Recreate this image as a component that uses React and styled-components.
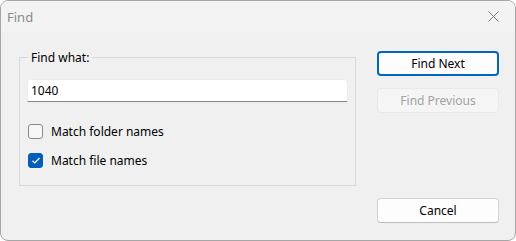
import styled, { createGlobalStyle } from "styled-components";

const Global = createGlobalStyle`
  html, body {
    margin: 0;
    padding: 0;
    background: #ffffff;
  }
  body {
    font-family: "Noto Sans", "Open Sans", sans-serif;
    font-size: 12px;
  }
`;

const Window = styled.div`
  box-sizing: border-box;
  width: 516px;
  height: 241px;
  border: 1px solid #a6a6a6;
  border-radius: 8px;
  background: #f0f0f0;
  display: flex;
  flex-direction: column;
  overflow: hidden;
`;

const TitleBar = styled.div`
  height: 31px;
  background: #f3f3f3;
  display: flex;
  align-items: center;
  justify-content: space-between;
  padding: 0 16px 0 6px;
  color: #8a8a8a;
  font-size: 13px;
`;

const Body = styled.div`
  flex: 1;
  display: flex;
  gap: 21px;
  padding: 19px 17px 17px 18px;
`;

const Group = styled.div`
  position: relative;
  box-sizing: border-box;
  width: 337px;
  height: 129px;
  margin-top: 6px;
  border: 1px solid #d8d8d8;
  padding: 21px 7px 0 7px;
  display: flex;
  flex-direction: column;
`;

const Legend = styled.span`
  position: absolute;
  top: -8px;
  left: 8px;
  padding: 0 3px;
  background: #f0f0f0;
  color: #000;
  line-height: 16px;
`;

const TextInput = styled.input`
  box-sizing: border-box;
  width: 321px;
  height: 23px;
  border: 1px solid #ececec;
  border-bottom: 1px solid #848484;
  border-radius: 3px 3px 0 0;
  background: #ffffff;
  font: inherit;
  padding: 0 3px;
  color: #000;
  outline: none;
`;

const CheckList = styled.div`
  display: flex;
  flex-direction: column;
  gap: 13px;
  margin-top: 21px;
`;

const CheckRow = styled.label`
  display: flex;
  align-items: center;
  gap: 8px;
  height: 16px;
  color: #000;
`;

const Box = styled.span`
  box-sizing: border-box;
  width: 15px;
  height: 15px;
  margin-left: 1px;
  border-radius: 3px;
  border: 1px solid ${(p) => (p.$checked ? "#005fb8" : "#8a8a8a")};
  background: ${(p) => (p.$checked ? "#005fb8" : "#f7f7f7")};
  display: flex;
  align-items: center;
  justify-content: center;
`;

const Side = styled.div`
  width: 122px;
  display: flex;
  flex-direction: column;
  gap: 12px;
`;

const Button = styled.button`
  box-sizing: border-box;
  width: 122px;
  height: 25px;
  font: inherit;
  border-radius: 4px;
  background: ${(p) => (p.$disabled ? "#f5f5f5" : "#fdfdfd")};
  color: ${(p) => (p.$disabled ? "#a2a2a2" : "#000")};
  border: ${(p) =>
    p.$primary ? "2px solid #0067c0" : p.$disabled ? "1px solid #e8e8e8" : "1px solid #d3d3d3"};
  ${(p) => (!p.$primary && !p.$disabled ? "border-bottom-color: #bdbdbd;" : "")}
  padding: 0;
  margin-top: ${(p) => (p.$push ? "auto" : "0")};
`;

const Close = () => (
  <svg width="11" height="11" viewBox="0 0 11 11">
    <path d="M0.5 0.5 L10.5 10.5 M10.5 0.5 L0.5 10.5" stroke="#7a7a7a" strokeWidth="1" />
  </svg>
);

const Check = () => (
  <svg width="10" height="9" viewBox="0 0 10 9">
    <path d="M1.5 4.8 L3.8 7 L8.5 2" stroke="#fff" strokeWidth="1.2" fill="none" />
  </svg>
);

export default function App() {
  return (
    <>
      <Global />
      <Window>
        <TitleBar>
          <span>Find</span>
          <Close />
        </TitleBar>
        <Body>
          <Group>
            <Legend>Find what:</Legend>
            <TextInput defaultValue="1040" />
            <CheckList>
              <CheckRow>
                <Box />
                Match folder names
              </CheckRow>
              <CheckRow>
                <Box $checked>
                  <Check />
                </Box>
                Match file names
              </CheckRow>
            </CheckList>
          </Group>
          <Side>
            <Button $primary>Find Next</Button>
            <Button $disabled>Find Previous</Button>
            <Button $push>Cancel</Button>
          </Side>
        </Body>
      </Window>
    </>
  );
}
